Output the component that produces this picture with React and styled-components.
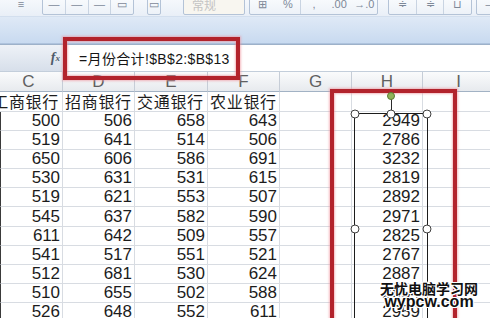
import React from 'react';
import styled, { createGlobalStyle } from 'styled-components';

const GlobalStyle = createGlobalStyle`
  html, body {
    margin: 0;
    padding: 0;
    background: #fff;
    overflow: hidden;
  }
  body {
    font-family: 'Liberation Sans', 'Noto Sans CJK SC', sans-serif;
  }
`;

const Page = styled.div`
  position: relative;
  width: 490px;
  height: 318px;
  overflow: hidden;
  background: #fff;
`;

/* ---------- ribbon ---------- */

const Ribbon = styled.div`
  height: 16px;
  display: flex;
  align-items: flex-end;
  overflow: hidden;
  background: linear-gradient(#f5f8fc, #e9eff7);
  border-bottom: 1px solid #d3dfee;
`;

const RibbonGroup = styled.div`
  flex: none;
  width: ${p => p.$w}px;
  height: 24px;
  margin-left: ${p => p.$ml || 0}px;
  margin-bottom: 1px;
  display: flex;
  align-items: center;
  box-sizing: border-box;
  border: ${p => (p.$plain ? 'none' : '1px solid #b4c3d7')};
  border-radius: 2px;
  background: ${p => (p.$field ? '#f8f6f0' : p.$plain ? 'transparent' : 'linear-gradient(#fdfeff, #edf2f8)')};
`;

const ToolButton = styled.span`
  flex: 1;
  height: 100%;
  display: flex;
  align-items: center;
  justify-content: center;
  padding-top: 3px;
  box-sizing: border-box;
  font-size: 11px;
  line-height: 11px;
  color: #7d8898;
  border-left: ${p => (p.$sep ? '1px solid #c9d4e2' : 'none')};
`;

const FieldText = styled.span`
  padding: 6px 0 0 8px;
  font-size: 12px;
  line-height: 12px;
  color: #c4c4c4;
`;

const GroupBand = styled.div`
  height: 26px;
  background: linear-gradient(#dfe9f6, #c8daf0);
  border-bottom: 1px solid #aec3dd;
`;

/* ---------- formula bar ---------- */

const FormulaBar = styled.div`
  height: 26px;
  display: flex;
  border-top: 1px solid #9db1c9;
  border-bottom: 1px solid #c3cedb;
`;

const NameArea = styled.div`
  width: 64px;
  display: flex;
  align-items: center;
  justify-content: flex-end;
  padding-right: 3px;
  box-sizing: border-box;
  background: linear-gradient(#eef2f7, #d7dfea);
  border-right: 1px solid #b7c4d5;
  font-family: 'Liberation Serif', serif;
  font-style: italic;
  font-weight: bold;
  font-size: 14px;
  color: #4f5a69;
`;

const FxSub = styled.sub`
  font-size: 9px;
`;

const FormulaInput = styled.div`
  flex: 1;
  display: flex;
  align-items: center;
  padding-left: 15px;
  font-size: 14px;
  letter-spacing: 0.35px;
  color: #151515;
`;

/* ---------- sheet ---------- */

const Sheet = styled.div`
  display: grid;
  grid-template-columns: 63px 72px 73px 72px 72px 71px 72px;
  grid-template-rows: 20px 19.5px repeat(11, 19.2px);
`;

const ColHead = styled.div`
  display: flex;
  align-items: center;
  justify-content: center;
  padding-right: ${p => (p.$first ? 5 : 0)}px;
  background: linear-gradient(#fafbfc, #e7eaee);
  border-right: 1px solid #c6cdd7;
  border-bottom: 1px solid #a2b2c4;
  font-family: 'Liberation Sans Narrow', 'Liberation Sans', sans-serif;
  font-size: 17px;
  color: #606060;
`;

const Cell = styled.div`
  display: flex;
  align-items: center;
  justify-content: ${p => (p.$text && !p.$first ? 'flex-start' : 'flex-end')};
  padding: 0 ${p => (p.$text && p.$first ? 3 : 2)}px 0 2px;
  overflow: hidden;
  white-space: nowrap;
  box-sizing: border-box;
  border-right: 1px solid #d8dce2;
  border-bottom: 1px solid #d8dce2;
  border-left: ${p => (p.$first && !p.$text ? '1px solid #3a3a3a' : 'none')};
  font-family: 'Liberation Sans Narrow', 'Liberation Sans', 'Noto Sans CJK SC', sans-serif;
  font-size: ${p => (p.$text ? 16 : 17)}px;
  letter-spacing: ${p => (p.$text ? 0.7 : 0)}px;
  color: #1c1c1c;
`;

/* ---------- overlays ---------- */

const Highlight = styled.div`
  position: absolute;
  left: ${p => p.$x}px;
  top: ${p => p.$y}px;
  width: ${p => p.$w}px;
  height: ${p => p.$h}px;
  box-sizing: border-box;
  border: 4px solid #b2232c;
  box-shadow: 0 0 2px 1px rgba(236, 140, 150, 0.6), inset 0 0 2px 1px rgba(236, 140, 150, 0.6);
`;

const ShapeBox = styled.div`
  position: absolute;
  left: 354px;
  top: 113px;
  width: 74px;
  height: 240px;
  box-sizing: border-box;
  border: 1px solid #1c1c1c;
`;

const Handle = styled.span`
  position: absolute;
  left: ${p => p.$x};
  top: ${p => p.$y};
  width: 7px;
  height: 7px;
  border-radius: 50%;
  background: #fff;
  border: 1px solid #3f3f3f;
  transform: translate(-50%, -50%);
`;

const RotateStem = styled.span`
  position: absolute;
  left: 50%;
  top: -15px;
  width: 1px;
  height: 15px;
  background: #2a2a2a;
`;

const RotateKnob = styled.span`
  position: absolute;
  left: 50%;
  top: -18px;
  width: 6px;
  height: 6px;
  border-radius: 50%;
  background: #8fb35a;
  border: 1px solid #5b7a32;
  transform: translate(-50%, -50%);
`;

const Watermark = styled.div`
  position: absolute;
  left: 378px;
  top: 281px;
  width: 102px;
  text-align: center;
  font-weight: bold;
  color: #111;
  text-shadow: 1px 0 0 #fff, -1px 0 0 #fff, 0 1px 0 #fff, 0 -1px 0 #fff,
    1px 1px 0 #fff, -1px -1px 0 #fff, 1px -1px 0 #fff, -1px 1px 0 #fff;
`;

const MarkTitle = styled.div`
  font-family: 'Noto Sans CJK SC', sans-serif;
  font-size: 14px;
  line-height: 14px;
`;

const MarkUrl = styled.div`
  font-family: 'Liberation Sans', sans-serif;
  font-size: 16px;
  line-height: 13px;
`;

const columns = ['C', 'D', 'E', 'F', 'G', 'H', 'I'];
const titles = ['工商银行', '招商银行', '交通银行', '农业银行'];

const data = [
  [500, 506, 658, 643, 2949],
  [519, 641, 514, 506, 2786],
  [650, 606, 586, 691, 3232],
  [530, 631, 531, 615, 2819],
  [519, 621, 553, 507, 2892],
  [545, 637, 582, 590, 2971],
  [611, 642, 509, 557, 2825],
  [541, 517, 551, 521, 2767],
  [512, 681, 530, 624, 2887],
  [510, 655, 502, 588, 2854],
  [526, 648, 552, 611, 2959],
];

export default function App() {
  return (
    <Page>
      <GlobalStyle />
      <Ribbon>
        <RibbonGroup $plain $w={14} $ml={14}>
          <ToolButton>≡</ToolButton>
        </RibbonGroup>
        <RibbonGroup $w={92} $ml={14}>
          <ToolButton>—</ToolButton>
          <ToolButton $sep>—</ToolButton>
          <ToolButton $sep>—</ToolButton>
          <ToolButton $sep>▭</ToolButton>
        </RibbonGroup>
        <RibbonGroup $w={14} $ml={13}>
          <ToolButton>▭</ToolButton>
        </RibbonGroup>
        <RibbonGroup $field $w={62} $ml={22}>
          <FieldText>常规</FieldText>
        </RibbonGroup>
        <RibbonGroup $w={129} $ml={4}>
          <ToolButton>⊞</ToolButton>
          <ToolButton>%</ToolButton>
          <ToolButton $sep>,</ToolButton>
          <ToolButton>.00</ToolButton>
          <ToolButton>→.0</ToolButton>
        </RibbonGroup>
        <RibbonGroup $w={84} $ml={10}>
          <ToolButton>≑</ToolButton>
          <ToolButton $sep>≑</ToolButton>
          <ToolButton $sep>⊔</ToolButton>
        </RibbonGroup>
        <RibbonGroup $w={30} $ml={4}>
          <ToolButton>—</ToolButton>
        </RibbonGroup>
      </Ribbon>
      <GroupBand />
      <FormulaBar>
        <NameArea>
          f<FxSub>x</FxSub>
        </NameArea>
        <FormulaInput>=月份合计!$B$2:$B$13</FormulaInput>
      </FormulaBar>
      <Sheet>
        {columns.map((c, i) => (
          <ColHead key={c} $first={i === 0}>
            {c}
          </ColHead>
        ))}
        {columns.map((c, i) => (
          <Cell key={'t' + c} $text $first={i === 0}>
            {titles[i] || ''}
          </Cell>
        ))}
        {data.map((row, r) =>
          columns.map((c, i) => {
            let v = '';
            if (i < 4) v = row[i];
            if (c === 'H') v = row[4];
            return (
              <Cell key={r + c} $first={i === 0}>
                {v}
              </Cell>
            );
          })
        )}
      </Sheet>

      <Highlight $x={63} $y={37} $w={177} $h={43} />
      <Highlight $x={330} $y={89} $w={127} $h={260} />

      <ShapeBox>
        <RotateStem />
        <RotateKnob />
        <Handle $x="0" $y="0" />
        <Handle $x="50%" $y="0" />
        <Handle $x="100%" $y="0" />
        <Handle $x="0" $y="115px" />
        <Handle $x="100%" $y="115px" />
      </ShapeBox>

      <Watermark>
        <MarkTitle>无忧电脑学习网</MarkTitle>
        <MarkUrl>wypcw.com</MarkUrl>
      </Watermark>
    </Page>
  );
}
